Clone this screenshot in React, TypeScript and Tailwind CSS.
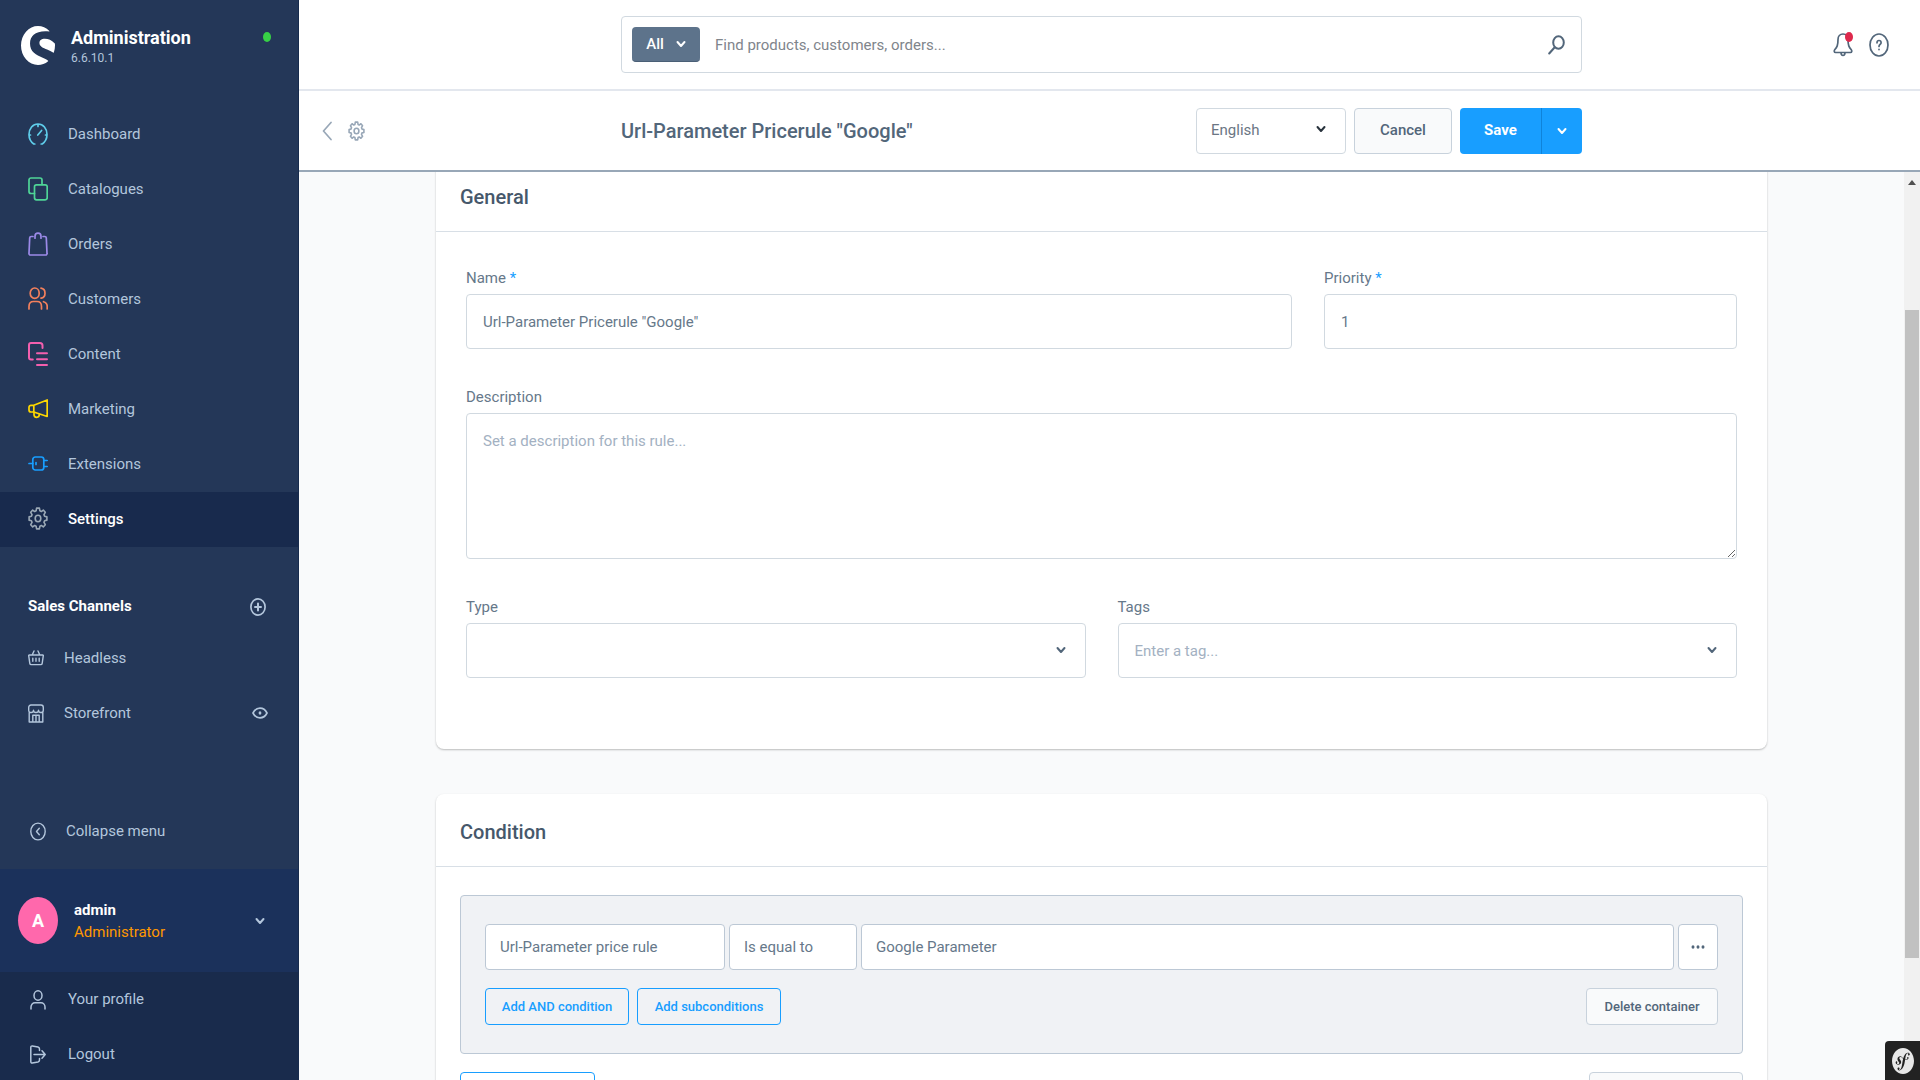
import { ChangeEvent, ReactNode, useState } from 'react';
import { SiShopware, SiSymfony } from 'react-icons/si';

interface IconProps {
    w: number,
    h: number,
    className?: string,
    stroke?: number,
    children: ReactNode
}

interface MenuEntry {
    label: string,
    color: string,
    icon: ReactNode,
    active?: boolean
}

const Icon = ({ w, h, className = "", stroke = 1.7, children }: IconProps) => (
    <svg width={w} height={h} viewBox={`0 0 ${w} ${h}`} fill="none" stroke="currentColor" strokeWidth={stroke} strokeLinecap="round" strokeLinejoin="round" className={`shrink-0 ${className}`} aria-hidden="true">
        {children}
    </svg>
);

// eight rounded teeth around an ellipse
const gearPath = (cx: number, cy: number, rx: number, ry: number) => {
    const points: string[] = [];
    for (let i = 0; i < 8; i++) {
        [[-16, 0.76], [-9, 1], [9, 1], [16, 0.76]].forEach(([offset, r]) => {
            const a = ((i * 45 + offset) * Math.PI) / 180;
            points.push(`${(cx + Math.sin(a) * rx * r).toFixed(2)} ${(cy - Math.cos(a) * ry * r).toFixed(2)}`);
        });
    }
    return `M${points.join("L")}Z`;
};

const Gear = ({ w, h, className = "" }: { w: number, h: number, className?: string }) => (
    <Icon w={w} h={h} className={className} stroke={1.6}>
        <path d={gearPath(w / 2, h / 2, w / 2 - 1, h / 2 - 1)} />
        <ellipse cx={w / 2} cy={h / 2} rx={w * 0.14} ry={h * 0.14} />
    </Icon>
);

const Chevron = ({ className = "" }: { className?: string }) => (
    <Icon w={10} h={8} className={className} stroke={2}>
        <path d="M1.5 2L5 6l3.5-4" />
    </Icon>
);

const menu: MenuEntry[] = [
    {
        label: "Dashboard", color: "text-[#5fcdea]", icon: (
            <Icon w={20} h={22}>
                <path d="M6.8 21h-1C3 19 1 15.500 1 11.500 1 5.500 4.800 1 10 1s9 4.500 9 10.500c0 4-2 7.500-4.800 9.500h-1M10 1v2.500M1 12h1.500M17.500 12H19M9.800 12l3.800-4.500" />
            </Icon>
        )
    },
    {
        label: "Catalogues", color: "text-[#4fd597]", icon: (
            <Icon w={20} h={24}>
                <path d="M6.5 16.5H3a2 2 0 0 1-2-2V3a2 2 0 0 1 2-2h9a2 2 0 0 1 2 2v4.5" />
                <rect x="6.5" y="7.8" width="12.7" height="15" rx="2" />
            </Icon>
        )
    },
    {
        label: "Orders", color: "text-[#9c8ae8]", icon: (
            <Icon w={20} h={24}>
                <path d="M5 4.5H3.2a1.5 1.5 0 0 0-1.5 1.4L1 21.2A1.5 1.5 0 0 0 2.5 23h15a1.5 1.5 0 0 0 1.5-1.8l-.7-15.3a1.5 1.5 0 0 0-1.5-1.4H15M7 6.2V4.500a3 3.300 0 0 1 6 0v1.700" />
            </Icon>
        )
    },
    {
        label: "Customers", color: "text-[#f4805c]", icon: (
            <Icon w={20} h={23}>
                <ellipse cx="6.7" cy="6.2" rx="4.5" ry="5.2" />
                <path d="M13 1.2c2.6.4 4 2.4 4 5s-1.4 4.6-4 5M1 22v-2.5c0-3 1.9-5 4.5-5H9c2.6 0 4.5 2 4.5 5V22M15.5 14.7c2.3.6 3.7 2.4 3.7 4.8V22" />
            </Icon>
        )
    },
    {
        label: "Content", color: "text-[#f35fae]", icon: (
            <Icon w={20} h={24} stroke={2}>
                <path d="M14.5 6V3.5A2.5 2.5 0 0 0 12 1H3a2 2 0 0 0-2 2v12.500a2 2 0 0 0 2 2h1.800M9 11.200h10M9 17.200h10M9 23h10" />
            </Icon>
        )
    },
    {
        label: "Marketing", color: "text-[#ffd800]", icon: (
            <Icon w={20} h={23}>
                <path d="M5.8 8.300L19.200 3v16.500L5.800 15zM5.800 8.300H3a2 2 0 0 0-2 2V13a2 2 0 0 0 2 2h2.800M6 15.300v2.200c0 1.600 1.200 2.800 2.700 2.800s2.600-1.200 2.600-2.700v-.4" />
            </Icon>
        )
    },
    {
        label: "Extensions", color: "text-[#189eff]", icon: (
            <Icon w={20} h={23}>
                <rect x="4.8" y="5" width="11" height="13" rx="2.5" />
                <path d="M1 11.5h3.8M8 10.5v2M15.8 8.5h3.4M15.8 14.5h3.4" />
            </Icon>
        )
    },
    { label: "Settings", color: "text-[#9aa8b5]", icon: <Gear w={20} h={23} />, active: true }
];

const Sidebar = () => (
    <aside className="flex w-[299px] shrink-0 flex-col border-r border-[#172b4d] bg-[#243758] text-[15px] text-[#b3c6dc]">
        <div className="flex h-[107px] shrink-0 items-start pl-[21px] pt-[26px] pr-[27px]">
            <SiShopware preserveAspectRatio="none" className="h-[39px] w-[34px] text-white" />
            <div className="ml-4 flex-1">
                <p className="text-lg leading-6 font-bold text-white">Administration</p>
                <p className="text-xs leading-4">6.6.10.1</p>
            </div>
            <span className="mt-1.5 h-[10px] w-2 rounded-[50%] bg-[#37d046]" />
        </div>
        <nav>
            {menu.map((item) => (
                <a key={item.label} href="#" className={`flex h-[55px] items-center gap-5 pl-7 ${item.active ? "bg-[#182a4d] font-medium text-white" : ""}`}>
                    <span className={`pb-0.5 ${item.color}`}>{item.icon}</span>
                    {item.label}
                </a>
            ))}
        </nav>
        <div className="mt-8 flex h-[55px] shrink-0 items-center justify-between pl-7 pr-8">
            <h2 className="font-bold text-white">Sales Channels</h2>
            <button type="button" aria-label="Add sales channel">
                <Icon w={16} h={18}>
                    <ellipse cx="8" cy="9" rx="7.1" ry="8.1" />
                    <path d="M8 5.500v7M5 9h6" strokeWidth="2" />
                </Icon>
            </button>
        </div>
        <a href="#" className="flex h-12 shrink-0 items-center gap-5 pl-7">
            <Icon w={16} h={16} stroke={1.4}>
                <path d="M1.200 5h13.600a.5.5 0 0 1 .5.6l-1.100 7.700a1.500 1.500 0 0 1-1.500 1.300H3.300a1.500 1.500 0 0 1-1.500-1.300L.7 5.600a.5.5 0 0 1 .5-.6zM4.300 4.800L6 1M11.700 4.800L10 1M4.800 8.200v3M8 8.200v3M11.200 8.200v3" />
            </Icon>
            Headless
        </a>
        <a href="#" className="flex h-[62px] shrink-0 items-center gap-5 pl-7 pr-[30px]">
            <Icon w={16} h={19} stroke={1.4}>
                <path d="M3 1h10c1.300 0 2.300 1 2.300 2.500v2.700c0 1.500-1 2.300-2.400 2.300S10.500 7.700 10.500 6.200c0 1.500-1 2.300-2.500 2.300S5.500 7.700 5.500 6.200c0 1.500-1 2.300-2.400 2.300S.7 7.700.7 6.200V3.500C.7 2 1.700 1 3 1zM1.200 8.200V18h13.600V8.200M4.800 18v-6.800h6.400V18M8 11.200V18" />
            </Icon>
            <span className="flex-1">Storefront</span>
            <Icon w={16} h={12}>
                <path d="M1 6C2.500 3 5 1.200 8 1.200S13.500 3 15 6c-1.500 3-4 4.800-7 4.800S2.500 9 1 6z" />
                <ellipse cx="8" cy="6" rx="1.4" ry="1.700" fill="currentColor" stroke="none" />
            </Icon>
        </a>
        <button type="button" className="mt-auto mb-[10px] flex h-[55px] shrink-0 items-center gap-5 pl-[30px]">
            <Icon w={16} h={19} stroke={1.4}>
                <ellipse cx="8" cy="9.5" rx="7.200" ry="8.400" />
                <path d="M9.300 6.300L6.500 9.500l2.800 3.200" />
            </Icon>
            Collapse menu
        </button>
        <div className="flex h-[103px] shrink-0 items-center bg-[#1b315b] pl-[18px] pr-[33px]">
            <span className="flex h-[47px] w-10 items-center justify-center rounded-[50%] bg-[#ff68ac] text-lg font-bold text-white">A</span>
            <div className="ml-4 flex-1 leading-[22px]">
                <p className="font-bold text-white">admin</p>
                <p className="text-[#ff9800]">Administrator</p>
            </div>
            <Chevron />
        </div>
        <div className="h-[108px] shrink-0 bg-[#192b4c]">
            <a href="#" className="flex h-[55px] items-center gap-[22px] pl-[30px]">
                <Icon w={16} h={20} stroke={1.5}>
                    <ellipse cx="8" cy="5.5" rx="4" ry="4.7" />
                    <path d="M1 19v-2c0-2.500 1.800-4.300 4-4.300h6c2.200 0 4 1.800 4 4.300v2" />
                </Icon>
                Your profile
            </a>
            <a href="#" className="flex h-[55px] items-center gap-[22px] pl-[30px]">
                <Icon w={16} h={19} stroke={1.5}>
                    <path d="M9.500 5.500V4c0-1.100-.6-1.700-1.500-1.900L2.300 1C1.300.9.8 1.500.8 2.500v14c0 1 .5 1.600 1.500 1.500L8 16.900c.9-.2 1.500-.8 1.500-1.900v-1.500M4 9.500h11.200M12 5.800l3.200 3.700-3.200 3.700" />
                </Icon>
                Logout
            </a>
        </div>
    </aside>
);

const TopBar = () => (
    <header className="flex h-[91px] shrink-0 items-center border-b-2 border-[#e3e7ee] bg-white pr-[31px]">
        <div className="w-[322px] shrink-0" />
        <div className="flex h-[57px] flex-1 items-center rounded border border-[#d1d9e0] pl-[10px] pr-4">
            <button type="button" className="flex h-[35px] w-[68px] items-center justify-center gap-3 rounded border-b border-[#4a5f76] bg-[#5d738b] text-[15px] font-medium text-white">
                All
                <Chevron />
            </button>
            <input type="search" aria-label="Search" placeholder="Find products, customers, orders..." className="ml-[15px] h-full flex-1 text-[15px] outline-none placeholder:text-[#7f858c]" />
            <button type="button" aria-label="Start search">
                <Icon w={17} h={20} className="text-[#52667a]" stroke={2}>
                    <ellipse cx="10.500" cy="7.500" rx="5.300" ry="6.300" />
                    <path d="M6.500 12.500L1.200 18.500" />
                </Icon>
            </button>
        </div>
        <div className="flex w-[307px] shrink-0 items-center justify-end gap-4 text-[#52667a]">
            <button type="button" aria-label="Notifications" className="relative">
                <Icon w={20} h={25}>
                    <path d="M5 7.500C5 4.200 7 2 10 2s5 2.200 5 5.500c0 6 1 7.500 3.300 10.200.8 1 .6 2.800-.8 2.800h-15c-1.400 0-1.600-1.800-.8-2.800C4 15 5 13.500 5 7.500zM8 21c.2 1.700.9 2.500 2 2.500s1.800-.8 2-2.500" />
                </Icon>
                <span className="absolute right-0 top-0 h-[10px] w-2 rounded-[50%] bg-[#de294c]" />
            </button>
            <button type="button" aria-label="Help">
                <Icon w={20} h={24}>
                    <ellipse cx="10" cy="12" rx="9" ry="11" />
                    <path d="M8 9.800C8 8.400 8.800 7.500 10 7.500s2.100.9 2.100 2.200c0 1.700-2.100 1.900-2.100 3.800M10 16.300v.3" />
                </Icon>
            </button>
        </div>
    </header>
);

const SmartBar = () => (
    <div className="flex h-[81px] shrink-0 items-center border-b-2 border-[#98a7b7] bg-white pr-[338px]">
        <div className="flex w-[322px] shrink-0 items-center gap-4 pl-[23px] text-[#98a7b7]">
            <a href="#" aria-label="Back">
                <Icon w={10} h={20}><path d="M9 1.500L1.500 10 9 18.500" /></Icon>
            </a>
            <a href="#" aria-label="Settings"><Gear w={17} h={20} /></a>
        </div>
        <h1 className="flex-1 text-xl font-medium text-[#52667a]">Url-Parameter Pricerule "Google"</h1>
        <div className="flex h-[46px] items-stretch gap-2 text-[15px]">
            <div className="relative w-[150px]">
                <select aria-label="Language" className="h-full w-full appearance-none rounded border border-[#d1d9e0] bg-white pl-[14px] text-[#6b7684] outline-none">
                    <option>English</option>
                </select>
                <Chevron className="pointer-events-none absolute right-5 top-[17px] text-[#29333d]" />
            </div>
            <button type="button" className="w-[98px] rounded border border-[#c8d2dc] bg-[#f9fafb] font-medium text-[#52667a]">Cancel</button>
            <div className="flex">
                <button type="button" className="w-[81px] rounded-l bg-[#189eff] font-bold text-white">Save</button>
                <button type="button" aria-label="More save options" className="flex w-[41px] items-center justify-center rounded-r border-l border-[#0f83da] bg-[#189eff] text-white">
                    <Chevron />
                </button>
            </div>
        </div>
    </div>
);

const Label = ({ id, text, required }: { id: string, text: string, required?: boolean }) => (
    <label htmlFor={id} className="mb-1 block pt-1 text-[15px] leading-6 text-[#66788a]">
        {text}{required && <span className="text-[#189eff]"> *</span>}
    </label>
);

const inputClass = "h-[55px] w-full rounded border border-[#d1d9e0] bg-white px-4 text-[15px] text-[#66788a] outline-none placeholder:text-[#a3b1c2]";
const conditionClass = "h-[46px] appearance-none rounded border border-[#bcc8d5] bg-white px-[14px] text-[15px] text-[#66788a] outline-none";
const primaryButton = "h-[37px] rounded border border-[#189eff] text-[13px] font-medium text-[#189eff]";
const neutralButton = "h-[37px] rounded border border-[#c8d2dc] bg-[#f9fafb] text-[13px] font-medium text-[#52667a]";

const GeneralCard = () => {
    const [rule, setRule] = useState({ name: 'Url-Parameter Pricerule "Google"', priority: "1", description: "", tags: "" });

    const handleChange = (event: ChangeEvent<HTMLInputElement | HTMLTextAreaElement>) => {
        const { name, value } = event.target;
        setRule(prevState => ({ ...prevState, [name]: value }));
    };

    return (
        <section className="rounded-lg bg-white shadow-[0_1px_2px_rgba(0,0,0,0.25)]">
            <h2 className="flex h-[73px] items-center border-b border-[#d8dfe6] px-6 pt-1 text-xl font-medium text-[#46586b]">General</h2>
            <form className="px-[30px] pt-[30px] pb-[71px]">
                <div className="grid grid-cols-[2fr_1fr] gap-8">
                    <div>
                        <Label id="name" text="Name" required />
                        <input id="name" name="name" value={rule.name} onChange={handleChange} className={inputClass} />
                    </div>
                    <div>
                        <Label id="priority" text="Priority" required />
                        <input id="priority" name="priority" value={rule.priority} onChange={handleChange} className={inputClass} />
                    </div>
                </div>
                <div className="mt-8">
                    <Label id="description" text="Description" />
                    <textarea id="description" name="description" value={rule.description} onChange={handleChange} placeholder="Set a description for this rule..." className="block h-[146px] w-full resize-y rounded border border-[#d1d9e0] p-4 text-[15px] text-[#66788a] outline-none placeholder:text-[#a3b1c2]" />
                </div>
                <div className="mt-8 grid grid-cols-2 gap-8">
                    <div>
                        <Label id="type" text="Type" />
                        <div className="relative">
                            <select id="type" className={`${inputClass} appearance-none`}>
                                <option></option>
                            </select>
                            <Chevron className="pointer-events-none absolute right-5 top-[23px] text-[#52667a]" />
                        </div>
                    </div>
                    <div>
                        <Label id="tags" text="Tags" />
                        <div className="relative">
                            <input id="tags" name="tags" value={rule.tags} onChange={handleChange} placeholder="Enter a tag..." className={inputClass} />
                            <Chevron className="pointer-events-none absolute right-5 top-[23px] text-[#52667a]" />
                        </div>
                    </div>
                </div>
            </form>
        </section>
    );
};

const ConditionCard = () => {
    const [parameter, setParameter] = useState("Google Parameter");

    return (
        <section className="mt-[45px] rounded-lg bg-white shadow-[0_1px_2px_rgba(0,0,0,0.25)]">
            <h2 className="flex h-[73px] items-center border-b border-[#d8dfe6] px-6 pt-1 text-xl font-medium text-[#46586b]">Condition</h2>
            <div className="px-6 pt-7 pb-10">
                <div className="rounded border border-[#bcc8d5] bg-[#f0f2f5] px-6 pt-7 pb-7">
                    <div className="flex gap-1">
                        <select aria-label="Condition type" className={`${conditionClass} w-[240px]`}>
                            <option>Url-Parameter price rule</option>
                        </select>
                        <select aria-label="Operator" className={`${conditionClass} w-32`}>
                            <option>Is equal to</option>
                        </select>
                        <input aria-label="Value" value={parameter} onChange={(e) => setParameter(e.target.value)} className={`${conditionClass} min-w-0 flex-1`} />
                        <button type="button" aria-label="Condition actions" className="flex h-[46px] w-10 items-center justify-center rounded border border-[#bcc8d5] bg-white text-[#52667a]">
                            <svg width="14" height="4" viewBox="0 0 14 4" fill="currentColor" aria-hidden="true">
                                <ellipse cx="2" cy="2" rx="1.5" ry="1.8" />
                                <ellipse cx="7" cy="2" rx="1.5" ry="1.8" />
                                <ellipse cx="12" cy="2" rx="1.5" ry="1.8" />
                            </svg>
                        </button>
                    </div>
                    <div className="mt-[18px] flex gap-2">
                        <button type="button" className={`${primaryButton} w-36`}>Add AND condition</button>
                        <button type="button" className={`${primaryButton} w-36`}>Add subconditions</button>
                        <button type="button" className={`${neutralButton} ml-auto w-[132px]`}>Delete container</button>
                    </div>
                </div>
                <div className="mt-[18px] flex justify-between">
                    <button type="button" aria-label="Add OR condition" className={`${primaryButton} w-[135px]`} />
                    <button type="button" aria-label="Delete all conditions" className={`${neutralButton} w-[154px]`} />
                </div>
            </div>
        </section>
    );
};

const App = () => {
    return (
        <div className="flex h-screen overflow-hidden bg-[#f9fafb] font-[Roboto,sans-serif]">
            <Sidebar />
            <div className="flex min-w-0 flex-1 flex-col">
                <TopBar />
                <SmartBar />
                <div className="flex min-h-0 flex-1">
                    <main className="min-w-0 flex-1 overflow-hidden px-[137px]">
                        <div className="-mt-[13px]">
                            <GeneralCard />
                            <ConditionCard />
                        </div>
                    </main>
                    <div className="flex w-4 shrink-0 flex-col items-center bg-[#f1f1f1] pt-2">
                        <svg width="8" height="5" viewBox="0 0 8 5" fill="#505050" aria-hidden="true"><path d="M4 0l4 5H0z" /></svg>
                        <div className="mt-[125px] h-[648px] w-[14px] bg-[#c1c1c1]" />
                    </div>
                </div>
            </div>
            <button type="button" aria-label="Symfony toolbar" className="fixed right-0 bottom-0 flex h-[39px] w-[35px] items-center justify-center rounded-tl bg-[#222]">
                <SiSymfony preserveAspectRatio="none" className="h-[26px] w-[22px] text-[#e8e8e8]" />
            </button>
        </div>
    );
};

export default App;
